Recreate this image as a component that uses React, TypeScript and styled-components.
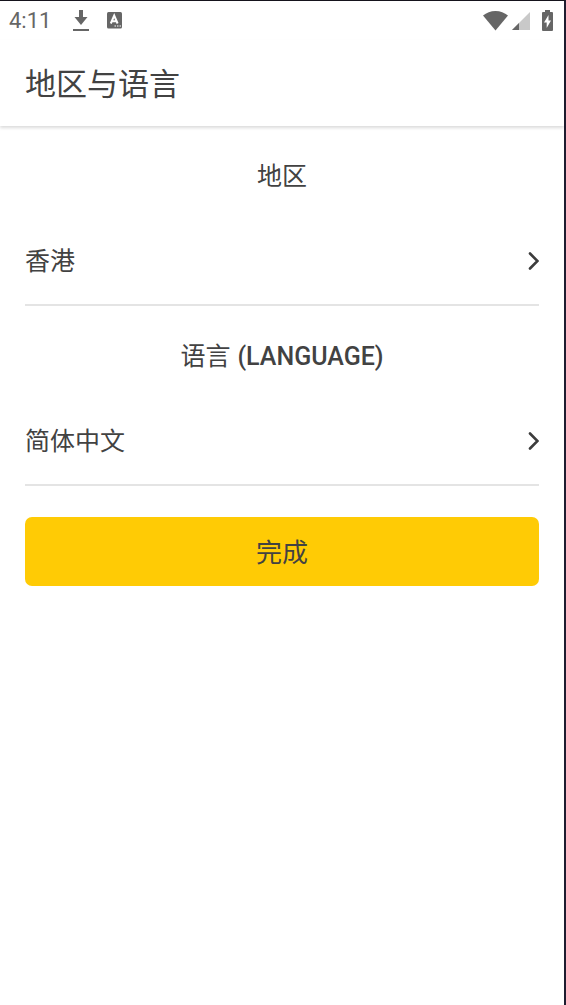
import React from 'react';
import styled, { createGlobalStyle } from 'styled-components';

const GlobalStyle = createGlobalStyle`
  *, *::before, *::after { box-sizing: border-box; }
  body {
    margin: 0;
    background: #fff;
    color: #424242;
    font-family: Roboto, "Noto Sans CJK SC", sans-serif;
  }
`;

const Screen = styled.div`
  min-height: 100vh;
  background: #fff;
  border-top: 1px solid #15131c;
  border-right: 2px solid #1f1d30;
`;

const StatusBar = styled.div`
  display: flex;
  align-items: center;
  justify-content: space-between;
  height: 39px;
  padding: 0 11px 0 9px;
  color: #666;
`;

const StatusGroup = styled.div<{ $gap: number }>`
  display: flex;
  align-items: center;
  gap: ${({ $gap }) => $gap}px;

  svg { display: block; }
`;

const Clock = styled.span`
  font-size: 22px;
  line-height: 26px;
  font-weight: 400;
  margin-right: 4px;
`;

const Header = styled.header`
  display: flex;
  align-items: center;
  height: 86px;
  padding: 3px 25px 0;
  box-shadow: 0 2px 3px rgba(0, 0, 0, 0.14);
`;

const Title = styled.h1`
  margin: 0;
  font-size: 31px;
  line-height: 46px;
  font-weight: 400;
`;

const Content = styled.main`
  padding: 0 25px;
`;

const SectionTitle = styled.h2`
  display: flex;
  align-items: center;
  justify-content: center;
  gap: 7px;
  height: 90px;
  margin: 0;
  padding-top: 11px;
  font-size: 25px;
  line-height: 36px;
  font-weight: 400;
`;

const Latin = styled.span`
  font-weight: 500;
`;

const Row = styled.button`
  display: flex;
  align-items: center;
  justify-content: space-between;
  width: 100%;
  height: 90px;
  padding: 3px 0 0;
  border: 0;
  border-bottom: 2px solid #e4e4e4;
  background: none;
  color: inherit;
  font-family: inherit;
  font-size: 25px;
  line-height: 36px;
  text-align: left;
  cursor: pointer;
`;

const DoneButton = styled.button`
  display: block;
  width: 100%;
  height: 69px;
  margin-top: 31px;
  padding: 2px 0 0;
  border: 0;
  border-radius: 7px;
  background: #ffcb05;
  color: inherit;
  font-family: inherit;
  font-size: 26px;
  line-height: 38px;
  cursor: pointer;
`;

const DownloadIcon = () => (
  <svg width="16" height="22" viewBox="0 0 16 22" fill="currentColor" aria-hidden="true">
    <path d="M6 0h4v7h4.500L8 15 1.500 7H6z" />
    <path d="M0 19h16v2H0z" />
  </svg>
);

const InputIcon = () => (
  <svg width="15" height="17" viewBox="0 0 15 17" aria-hidden="true">
    <rect width="15" height="16.500" rx="1.500" fill="currentColor" />
    <path d="M3.800 11.500 7.200 3.500 10.600 11.500M5 9.200h4.400" fill="none" stroke="#fff" strokeWidth="2" />
    <path d="M7.500 14H9M10 14h1.500M12.500 14H14" stroke="#fff" strokeWidth="1.200" />
  </svg>
);

const WifiIcon = () => (
  <svg width="25" height="20" viewBox="0 0 25 20" fill="currentColor" aria-hidden="true">
    <path d="M12.500 19.500 0 4.600C3.400 1.700 7.700 0 12.500 0S21.600 1.700 25 4.600z" />
  </svg>
);

const SignalIcon = () => (
  <svg width="18" height="18" viewBox="0 0 18 18" aria-hidden="true">
    <path d="M18 0v18H0z" fill="#c9c9c9" />
    <path d="M7 11v7H0z" fill="currentColor" />
  </svg>
);

const BatteryIcon = () => (
  <svg width="11" height="21" viewBox="0 0 11 21" aria-hidden="true">
    <path
      d="M3 0h5v2h2q1 0 1 1v17q0 1-1 1H1q-1 0-1-1V3q0-1 1-1h2z"
      fill="currentColor"
    />
    <path d="M6.500 5 2 12.500h2.700V18L9 10.500H6.500z" fill="#fff" />
  </svg>
);

const Chevron = () => (
  <svg width="11" height="20" viewBox="0 0 11 20" fill="none" aria-hidden="true">
    <path
      d="M2 1.500 9.500 9 2 16.500"
      stroke="#3c3c3c"
      strokeWidth="2.600"
      strokeLinecap="round"
    />
  </svg>
);

export default function App() {
  return (
    <Screen lang="zh-Hans">
      <GlobalStyle />
      <StatusBar>
        <StatusGroup $gap={18}>
          <Clock>4:11</Clock>
          <DownloadIcon />
          <InputIcon />
        </StatusGroup>
        <StatusGroup $gap={12}>
          <StatusGroup $gap={4}>
            <WifiIcon />
            <SignalIcon />
          </StatusGroup>
          <BatteryIcon />
        </StatusGroup>
      </StatusBar>
      <Header>
        <Title>地区与语言</Title>
      </Header>
      <Content>
        <section>
          <SectionTitle>地区</SectionTitle>
          <Row type="button">
            香港
            <Chevron />
          </Row>
        </section>
        <section>
          <SectionTitle>
            语言 <Latin>(LANGUAGE)</Latin>
          </SectionTitle>
          <Row type="button">
            简体中文
            <Chevron />
          </Row>
        </section>
        <DoneButton type="button">完成</DoneButton>
      </Content>
    </Screen>
  );
}
